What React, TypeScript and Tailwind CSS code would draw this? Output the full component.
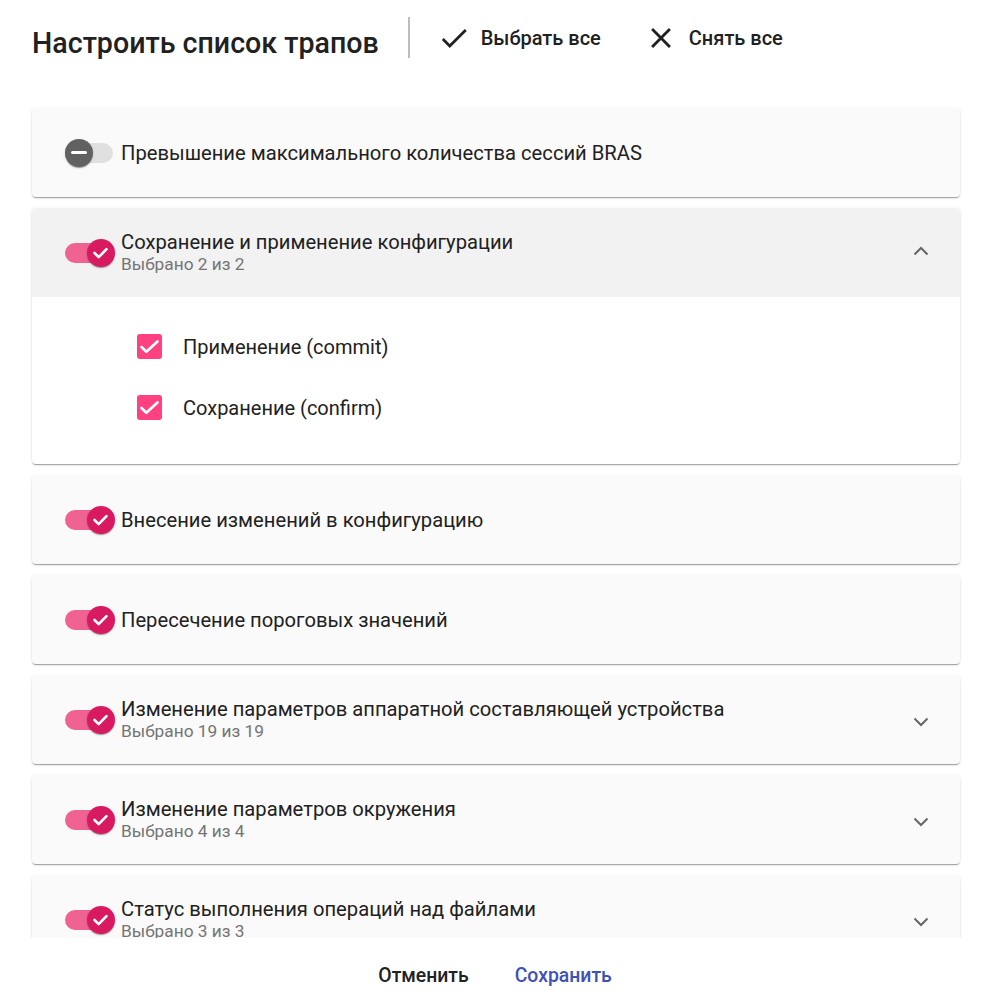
import React from "react";

const font = { fontFamily: "Roboto, 'Noto Sans', sans-serif" };

function Toggle({ on }: { on: boolean }) {
  return (
    <div className="relative w-[50px] h-[28px] shrink-0">
      <div
        className={
          "absolute left-0 right-[2px] top-[4px] h-[20px] rounded-full " +
          (on ? "bg-[#f06292]" : "bg-[#e0e0e0]")
        }
      />
      {on ? (
        <div className="absolute right-0 top-0 w-[28px] h-[28px] rounded-full bg-[#d81b60] shadow-[0_2px_1px_-1px_rgba(0,0,0,0.2),0_1px_1px_0_rgba(0,0,0,0.14),0_1px_3px_0_rgba(0,0,0,0.12)]">
          <svg width="28" height="28" viewBox="0 0 28 28">
            <path d="M7.5 14l4.2 4.2L19.5 10.2" fill="none" stroke="#fff" strokeWidth="2.6" strokeLinecap="round" strokeLinejoin="round" />
          </svg>
        </div>
      ) : (
        <div className="absolute left-0 top-0 w-[28px] h-[28px] rounded-full bg-[#616161] shadow-[0_2px_1px_-1px_rgba(0,0,0,0.2),0_1px_1px_0_rgba(0,0,0,0.14),0_1px_3px_0_rgba(0,0,0,0.12)] flex items-center justify-center">
          <div className="w-[16px] h-[2.5px] bg-white rounded-full" />
        </div>
      )}
    </div>
  );
}

function Chevron({ up }: { up: boolean }) {
  return (
    <svg width="16" height="10" viewBox="0 0 16 10">
      <path
        d={up ? "M1.5 8.5L8 2l6.5 6.5" : "M1.5 1.5L8 8l6.5-6.5"}
        fill="none"
        stroke="#666"
        strokeWidth="2"
      />
    </svg>
  );
}

function Checkbox() {
  return (
    <div className="w-[25px] h-[25px] rounded-[3px] bg-[#ff4081] shrink-0">
      <svg width="25" height="25" viewBox="0 0 25 25">
        <path d="M4.5 13l4.8 4.8L20.5 7.5" fill="none" stroke="#fff" strokeWidth="2.7" strokeLinecap="round" strokeLinejoin="round" />
      </svg>
    </div>
  );
}

type Item = { title: string; sub?: string; on: boolean; chevron?: "up" | "down" };

const cardShadow =
  "shadow-[0_2px_1px_-1px_rgba(0,0,0,0.2),0_1px_1px_0_rgba(0,0,0,0.14),0_1px_3px_0_rgba(0,0,0,0.12)]";

function Header({ item, expanded }: { item: Item; expanded?: boolean }) {
  return (
    <div
      className={
        "h-[89px] flex items-center pl-[33px] pr-[31px] " +
        (expanded ? "bg-[#f2f2f2] rounded-t-[4px]" : "")
      }
    >
      <Toggle on={item.on} />
      <div className="ml-[6px] flex-1 flex flex-col">
        <div className="text-[20.2px] leading-[22px] text-[#212121]">{item.title}</div>
        {item.sub && (
          <div className="text-[17.3px] leading-[22px] text-[#757575]">{item.sub}</div>
        )}
      </div>
      {item.chevron && (
        <div className={"w-[16px] flex justify-center " + (item.chevron === "down" ? "mt-[4px]" : "-mt-[4px]")}>
          <Chevron up={item.chevron === "up"} />
        </div>
      )}
    </div>
  );
}

export default function App() {
  const items: Item[] = [
    { title: "Внесение изменений в конфигурацию", on: true },
    { title: "Пересечение пороговых значений", on: true },
    {
      title: "Изменение параметров аппаратной составляющей устройства",
      sub: "Выбрано 19 из 19",
      on: true,
      chevron: "down",
    },
    { title: "Изменение параметров окружения", sub: "Выбрано 4 из 4", on: true, chevron: "down" },
    {
      title: "Статус выполнения операций над файлами",
      sub: "Выбрано 3 из 3",
      on: true,
      chevron: "down",
    },
  ];

  return (
    <div className="w-[990px] h-[1006px] bg-white flex flex-col overflow-hidden" style={font}>
      {/* Title bar */}
      <div className="h-[96px] shrink-0 flex items-start pl-[32px]">
        <h1 className="mt-[27px] text-[28.6px] leading-[32px] font-medium text-[#212121]">
          Настроить список трапов
        </h1>
        <div className="mt-[17px] ml-[29px] w-[2px] h-[41px] bg-[#bdbdbd]" />
        <button className="mt-[20px] ml-[27px] h-[36px] flex items-center gap-[10px] text-[20px] font-medium text-[#212121]">
          <svg width="34" height="34" viewBox="0 0 24 24">
            <path d="M9 16.17L4.83 12l-1.42 1.41L9 19 21 7l-1.41-1.41z" fill="#212121" />
          </svg>
          Выбрать все
        </button>
        <button className="mt-[20px] ml-[43px] h-[36px] flex items-center gap-[11px] text-[20px] font-medium text-[#212121]">
          <svg width="34" height="34" viewBox="0 0 24 24">
            <path
              d="M19 6.41L17.59 5 12 10.59 6.41 5 5 6.41 10.59 12 5 17.59 6.41 19 12 13.41 17.59 19 19 17.59 13.41 12z"
              fill="#212121"
            />
          </svg>
          Снять все
        </button>
      </div>

      {/* List */}
      <div className="h-[842px] shrink-0 overflow-hidden pt-[12px] pl-[32px] pr-[30px]">
        <div className="flex flex-col gap-[11px]">
          <div className={"bg-[#fafafa] rounded-[4px] " + cardShadow}>
            <Header item={{ title: "Превышение максимального количества сессий BRAS", on: false }} />
          </div>
          <div className={"bg-white rounded-[4px] " + cardShadow}>
            <Header
              expanded
              item={{
                title: "Сохранение и применение конфигурации",
                sub: "Выбрано 2 из 2",
                on: true,
                chevron: "up",
              }}
            />
            <div className="pt-[19px] pb-[26px] pl-[105px] flex flex-col">
              {["Применение (commit)", "Сохранение (confirm)"].map((t) => (
                <div key={t} className="h-[61px] flex items-center gap-[21px]">
                  <Checkbox />
                  <span className="text-[20px] text-[#212121]">{t}</span>
                </div>
              ))}
            </div>
          </div>
          {items.map((it) => (
            <div key={it.title} className={"bg-[#fafafa] rounded-[4px] " + cardShadow}>
              <Header item={it} />
            </div>
          ))}
        </div>
      </div>

      {/* Footer */}
      <div className="flex-1 flex items-center justify-center gap-[14px] pt-[8px]">
        <button className="px-[16px] h-[40px] text-[19.4px] font-medium text-[#212121]">Отменить</button>
        <button className="px-[16px] h-[40px] text-[19.4px] font-medium text-[#3f51b5]">Сохранить</button>
      </div>
    </div>
  );
}
